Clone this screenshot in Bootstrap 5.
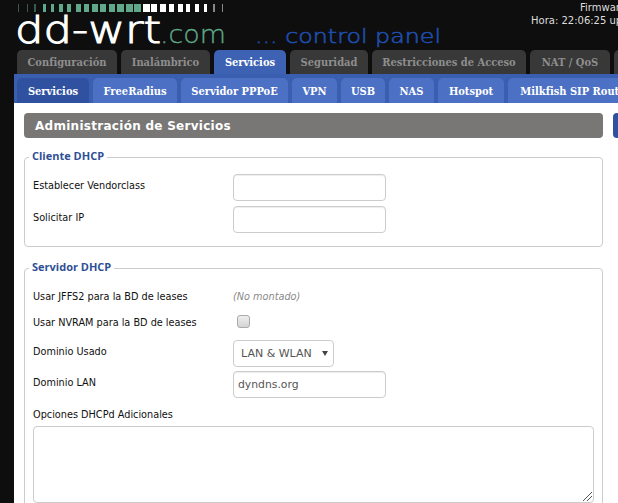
<!DOCTYPE html>
<html lang="es">
<head>
<meta charset="utf-8">
<title>DD-WRT</title>
<link rel="stylesheet" href="https://cdn.jsdelivr.net/npm/bootstrap@5.3.0/dist/css/bootstrap.min.css">
<style>
html,body{height:503px;overflow:hidden;background:#0e0e0e;}
body{font-family:"DejaVu Sans Condensed","DejaVu Sans",sans-serif;font-size:10.8px;color:#111;width:618px;}
.wrap-top{height:48px;position:relative;}
.logo-svg{display:block;width:460px;height:48px;}
.stat-info{position:absolute;top:1px;left:531px;width:200px;color:#ddd;font-size:10px;line-height:13px;white-space:nowrap;font-family:"DejaVu Sans",sans-serif;}
.stat-a{padding-left:49px;}
.tabs-main{height:24px;padding-left:17px;gap:4px;margin-top:2px;flex-wrap:nowrap;overflow:hidden;}
.tab-m{height:24px;background:#383838;color:#8e8e8e;font:bold 11px "DejaVu Serif Condensed","DejaVu Serif",serif;border-radius:5px 5px 0 0;line-height:26px;text-align:center;flex:none;white-space:nowrap;}
.tab-m.on{background:#3d62b3;color:#fff;}
.m1{width:100px}.m2{width:89px}.m3{width:72px}.m4{width:78px}.m5{width:154px}.m6{width:80px}.m7{width:60px}
.sub-bar{height:29px;margin-left:14px;background:#3a5fb0;padding:4px 0 0 3px;gap:4px;overflow:hidden;flex-wrap:nowrap;}
.tab-s{height:25px;background:#4c70c4;color:#fff;font:bold 11px "DejaVu Serif Condensed","DejaVu Serif",serif;border-radius:5px 5px 0 0;line-height:28px;text-align:center;flex:none;white-space:nowrap;}
.tab-s.on{background:#2f51a0;}
.s1{width:72px}.s2{width:84px}.s3{width:107px}.s4{width:45px}.s5{width:44px}.s6{width:45px}.s7{width:66px}.s8{width:135px}
.panel-w{margin-left:14px;height:403px;background:#fff;padding:10px 0 0 10px;position:relative;overflow:hidden;}
.title-bar{width:579px;height:25px;background:#787775;color:#fff;border-radius:4px;font:bold 12px "DejaVu Sans",sans-serif;line-height:26px;padding-left:11px;letter-spacing:.28px;}
.side-b{position:absolute;left:599px;top:10px;width:30px;height:25px;background:#2f51a0;border-radius:4px;}
fieldset.grp{width:579px;border:1px solid #ccc;border-radius:4px;padding:0 8px;margin:0;position:relative;}
.grp-a{height:90px;margin-top:19px !important;}
.grp-b{height:260px;margin-top:21px !important;}
.grp-t{position:absolute;top:-9px;left:4px;background:#fff;padding:0 3px;color:#2f4f96;font:bold 11px "Open Sans","DejaVu Sans",sans-serif;line-height:14px;}
.lbl{width:200px;flex:none;white-space:nowrap;}
.row-a{padding-top:16px}.row-b{padding-top:5px}
.lb-a{padding-top:4px}
.row-c{padding-top:20px;height:41px}
.row-d{padding-top:5px;height:27px}
.row-e{padding-top:3px}.lb-e{padding-top:4px}
.row-f{padding-top:4px}.lb-f{padding-top:4px}
.row-g{padding-top:9px;height:28px}
.inp{width:153px;height:27px;border:1px solid #ccc;border-radius:4px;background:#fff;color:#555;font-size:10.8px;padding:0 4px;line-height:25px;font-family:"DejaVu Sans",sans-serif;box-shadow:inset 0 1px 1px rgba(0,0,0,.075);}
.sel-x{width:101px;height:27px;border:1px solid #ccc;border-radius:4px;background:#fff;color:#555;font-size:11px;padding:0 0 0 7px;line-height:25px;position:relative;font-family:"DejaVu Sans",sans-serif;}
.sel-x::after{content:"";position:absolute;right:5px;top:10px;border:3px solid transparent;border-top:5px solid #444;border-bottom:0;}
.chk-b{width:13px;height:13px;border:1px solid #aaa;border-radius:3px;background:linear-gradient(#eee,#d4d4d4);margin-left:4px;}
.nomont{color:#8a8a8a;font-style:italic;}
.ta-x{width:561px;height:77px;border:1px solid #ccc;border-radius:4px;position:relative;display:block;background:#fff;}
.grip{position:absolute;right:0;bottom:0;}
</style>
</head>
<body>
<div class="wrap-top">
<svg class="logo-svg" viewBox="0 0 460 48" xmlns="http://www.w3.org/2000/svg">
<g id="eq"></g>
<text x="15" y="43" font-family="DejaVu Sans" font-weight="200" font-size="38" fill="#fff" stroke="#fff" stroke-width="1.1" textLength="146" lengthAdjust="spacingAndGlyphs">dd-wrt</text>
<text x="160" y="43" font-family="DejaVu Sans" font-weight="200" font-size="24" fill="#5fa98a" stroke="#5fa98a" stroke-width=".3" textLength="66" lengthAdjust="spacingAndGlyphs">.com</text>
<text x="255" y="43" font-family="DejaVu Sans" font-weight="200" font-size="19" fill="#1f4fb3" stroke="#1f4fb3" stroke-width=".5" textLength="186" lengthAdjust="spacingAndGlyphs">... control panel</text>
</svg>
<div class="stat-info"><div class="stat-a">Firmware: DD-WRT</div><div>Hora: 22:06:25 up 1 day</div></div>
</div>
<div class="d-flex tabs-main">
<div class="tab-m m1">Configuración</div>
<div class="tab-m m2">Inalámbrico</div>
<div class="tab-m on m3">Servicios</div>
<div class="tab-m m4">Seguridad</div>
<div class="tab-m m5">Restricciones de Acceso</div>
<div class="tab-m m6">NAT / QoS</div>
<div class="tab-m m7">Admin</div>
</div>
<div class="d-flex sub-bar">
<div class="tab-s on s1">Servicios</div>
<div class="tab-s s2">FreeRadius</div>
<div class="tab-s s3">Servidor PPPoE</div>
<div class="tab-s s4">VPN</div>
<div class="tab-s s5">USB</div>
<div class="tab-s s6">NAS</div>
<div class="tab-s s7">Hotspot</div>
<div class="tab-s s8">Milkfish SIP Router</div>
</div>
<div class="panel-w">
<div class="title-bar">Administración de Servicios</div>
<div class="side-b"></div>
<fieldset class="grp grp-a">
<div class="grp-t">Cliente DHCP</div>
<div class="d-flex align-items-start row-a"><div class="lbl lb-a">Establecer Vendorclass</div><div class="inp"></div></div>
<div class="d-flex align-items-start row-b"><div class="lbl lb-a">Solicitar IP</div><div class="inp"></div></div>
</fieldset>
<fieldset class="grp grp-b">
<div class="grp-t">Servidor DHCP</div>
<div class="d-flex row-c"><div class="lbl">Usar JFFS2 para la BD de leases</div><div class="nomont">(No montado)</div></div>
<div class="d-flex row-d"><div class="lbl">Usar NVRAM para la BD de leases</div><div class="chk-b"></div></div>
<div class="d-flex align-items-start row-e"><div class="lbl lb-e">Dominio Usado</div><div class="sel-x">LAN &amp; WLAN</div></div>
<div class="d-flex align-items-start row-f"><div class="lbl lb-f">Dominio LAN</div><div class="inp">dyndns.org</div></div>
<div class="row-g">Opciones DHCPd Adicionales</div>
<div class="ta-x"><svg class="grip" width="12" height="12" viewBox="0 0 12 12"><path d="M2 11 11 2M6 11 11 6" stroke="#555" stroke-width="1"/></svg></div>
</fieldset>
</div>
<script>
var g=document.getElementById('eq'),s='';
var w=[1,1,2,3,3,4,4,5,5,6,6,6,7,7,7,7,6,6,5,5,4,4,3,2,1];
for(var i=0;i<w.length;i++){
 var cx=Math.round(18+i*8.5);
 var col=i<3?'#3a5a4e':(i<15?'#5fa98a':(i<23?'#fff':'#888'));
 s+='<rect x="'+Math.round(cx-w[i]/2)+'" y="4" width="'+w[i]+'" height="8" fill="'+col+'"/>';
}
g.innerHTML=s;
</script>
</body>
</html>
